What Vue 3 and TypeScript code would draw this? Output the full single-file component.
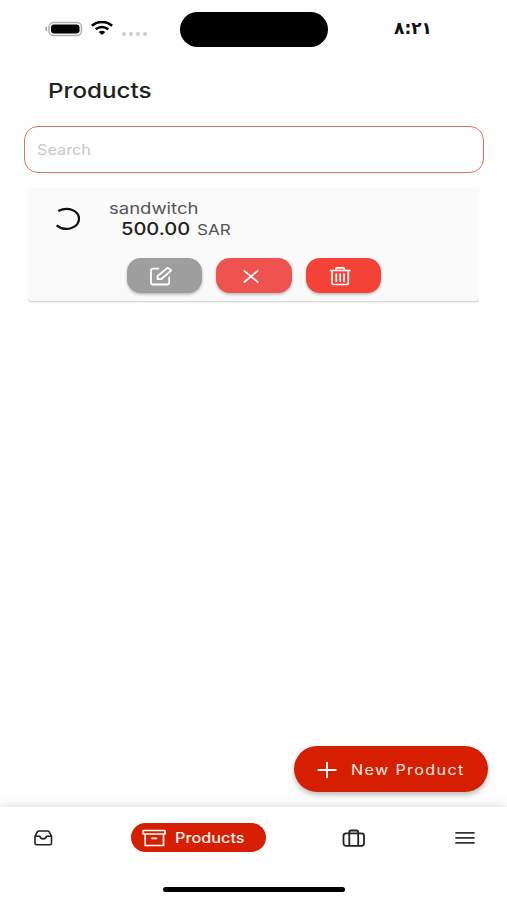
<script setup lang="ts">
import { ref } from 'vue'

interface Product {
  id: number
  name: string
  price: string
  currency: string
}

const query = ref('')
const products: Product[] = [{ id: 1, name: 'sandwitch', price: '500.00', currency: 'SAR' }]
</script>

<template>
  <div class="screen">
    <header class="status">
      <svg class="battery" viewBox="0 0 38 16" fill="none">
        <path d="M1.600 5.800v4.400C.4 9.700.4 6.300 1.600 5.800Z" fill="#999" stroke="#999" stroke-width=".6" />
        <rect x="4" y="1.500" width="32.500" height="13" rx="4.500" stroke="#b0b0b0" stroke-width="1.500" />
        <rect x="6" y="3.500" width="28.500" height="9" rx="3" fill="#000" />
      </svg>
      <svg class="wifi" viewBox="0 0 22 14" fill="none" stroke="#000">
        <path d="M.9 4.800C6.500-.3 15.500-.3 21.100 4.800" stroke-width="2.700" />
        <path d="M4.700 8.300C8.400 5.300 13.600 5.300 17.300 8.300" stroke-width="2.500" />
        <path d="M7.700 11.100Q11 8.600 14.300 11.100L11 13.900Z" fill="#000" stroke="none" />
      </svg>
      <div class="dots"><i v-for="n in 4" :key="n"></i></div>
      <div class="island"></div>
      <div class="time"><span>٨:٢١</span></div>
    </header>

    <h1 class="title"><span>Products</span></h1>

    <label class="search">
      <input v-model="query" type="text" placeholder="Search" aria-label="Search" />
    </label>

    <article v-for="p in products" :key="p.id" class="card">
      <div class="info">
        <svg class="spinner" viewBox="0 0 26 24" fill="none" stroke="#111" stroke-width="2.200">
          <path d="M3.300 4C13-1 24 3.500 24 11.800S11.500 26 1.600 18.300" />
        </svg>
        <div class="text">
          <div class="name"><span>{{ p.name }}</span></div>
          <div class="price">
            <b><span>{{ p.price }}</span></b>
            <em><span>{{ p.currency }}</span></em>
          </div>
        </div>
      </div>
      <div class="actions">
        <button class="edit" aria-label="Edit">
          <svg viewBox="0 0 24 20" fill="none" stroke="#fff" stroke-width="1.800" stroke-linejoin="round" stroke-linecap="round">
            <path d="M9.500 2.700H4Q2 2.700 2 4.700V16.500Q2 18.500 4 18.500H18.200Q20.200 18.500 20.200 16.500V11.500" />
            <path d="M8.600 13.200V10L18.700 1.700L22.200 4.500L12.100 13.200Z" />
          </svg>
        </button>
        <button class="cancel" aria-label="Deactivate">
          <svg viewBox="0 0 24 20" fill="none" stroke="#fff" stroke-width="1.700" stroke-linecap="round">
            <path d="M5.300 4.800L18.700 16M18.700 4.800L5.300 16" />
          </svg>
        </button>
        <button class="delete" aria-label="Delete">
          <svg viewBox="0 0 24 20" fill="none" stroke="#fff" stroke-width="1.700" stroke-linejoin="round" stroke-linecap="round">
            <path d="M2.500 4.500H21.800M7.800 4.300V3Q7.800 1.900 9 1.900H15.300Q16.500 1.900 16.500 3V4.300M4 4.500V16.700Q4 18.500 6 18.500H18.300Q20.300 18.500 20.300 16.700V4.500M8.300 8V15.200M12.200 8V15.200M16 8V15.200" />
          </svg>
        </button>
      </div>
    </article>

    <div class="fab-row">
      <button class="fab">
        <svg viewBox="0 0 20 18" stroke="#fff" stroke-width="1.900" stroke-linecap="round">
          <path d="M1.300 9H18.700M10 1.800V16.200" />
        </svg>
        <span>New Product</span>
      </button>
    </div>

    <nav class="nav">
      <a class="inbox" aria-label="Orders">
        <svg viewBox="0 0 20 18" fill="none" stroke="#222" stroke-width="1.600" stroke-linejoin="round">
          <path d="M2 7.200L4.400 2.900Q4.900 2 6 2H14.600Q15.700 2 16.200 2.900L18.500 7.200V14.200Q18.500 15.800 16.900 15.800H3.600Q2 15.800 2 14.200ZM2 7.200H6.900Q7.600 9.900 10.200 9.900T13.500 7.200H18.500" />
        </svg>
      </a>
      <a class="active">
        <svg viewBox="0 0 24 18" fill="none" stroke="#fff" stroke-width="1.700" stroke-linejoin="round" stroke-linecap="round">
          <path d="M1.200 1.500H23V5H1.200ZM3.200 5V16.500H21.500V5M10 9.300H14.500" />
        </svg>
        <span>Products</span>
      </a>
      <a class="case" aria-label="Catalog">
        <svg viewBox="0 0 24 18" fill="none" stroke="#222" stroke-width="1.800" stroke-linejoin="round">
          <rect x="1.500" y="4.400" width="20.500" height="12.400" rx="2.500" />
          <path d="M7.300 16.800V3.200Q7.300 1.500 9 1.500H14.500Q16.200 1.500 16.200 3.200V16.800" />
        </svg>
      </a>
      <a class="menu" aria-label="Menu">
        <svg viewBox="0 0 20 14" stroke="#333" stroke-width="1.800">
          <path d="M.3 1.900H19.600M.3 6.900H19.600M.3 11.900H19.600" />
        </svg>
      </a>
    </nav>
    <footer class="home"><div></div></footer>
  </div>
</template>

<style>
body {
  background: #fefefe;
}
</style>

<style scoped>
* {
  box-sizing: border-box;
}
.screen {
  width: 507px;
  height: 900px;
  display: flex;
  flex-direction: column;
  overflow: hidden;
  background: #fefefe;
  color: #222;
  font-family: Inter, "Liberation Sans", sans-serif;
}
svg {
  display: block;
  flex: none;
}
button {
  border: 0;
  padding: 0;
  font-family: inherit;
}
span {
  display: inline-block;
  transform-origin: 0 50%;
  white-space: nowrap;
}
.status {
  height: 59px;
  padding-left: 45px;
  display: flex;
  align-items: center;
  flex: none;
}
.battery {
  width: 38px;
  height: 16px;
  margin-top: -2px;
}
.wifi {
  width: 22px;
  height: 14px;
  margin: -3px 0 0 8px;
}
.dots {
  display: flex;
  gap: 3px;
  margin: 8px 0 0 9px;
}
.dots i {
  width: 4px;
  height: 4px;
  border-radius: 50%;
  background: #cfcfcf;
}
.island {
  width: 148px;
  height: 35.500px;
  margin-left: 33px;
  border-radius: 18px;
  background: #000;
}
.time {
  margin: -3px 0 0 66px;
  width: 40px;
  font: bold 17px/20px "DejaVu Sans", sans-serif;
  color: #111;
}
.title {
  height: 67px;
  margin: 0;
  padding-left: 48px;
  font-size: 20.5px;
  line-height: 64px;
  font-weight: 500;
}
.title span {
  transform: scaleX(1.18);
}
.search {
  flex: none;
  width: 460px;
  height: 47px;
  margin-left: 24px;
  padding-left: 12px;
  display: flex;
  align-items: center;
  border: 1.500px solid #e0705f;
  border-radius: 14px;
  overflow: hidden;
}
.search input {
  width: 360px;
  height: 30px;
  padding: 0;
  border: 0;
  outline: 0;
  background: transparent;
  font: 400 14px/30px Inter, sans-serif;
  transform: scaleX(1.16);
  transform-origin: 0 50%;
}
.search input::placeholder {
  color: #c8c8c8;
  opacity: 1;
}
.card {
  flex: none;
  width: 451px;
  height: 113px;
  margin: 15px 0 0 28px;
  background: #fafafa;
  border-radius: 4px;
  box-shadow: 0 1px 2px rgba(0, 0, 0, 0.2);
  clip-path: inset(0 0 -4px 0);
}
.info {
  height: 70px;
  padding: 9px 0 0 27px;
  display: flex;
}
.spinner {
  width: 26px;
  height: 24px;
  margin-top: 10px;
}
.text {
  margin-left: 28px;
}
.name {
  height: 21px;
  font-size: 15.500px;
  line-height: 23px;
  color: #555;
}
.name span {
  transform: scaleX(1.195);
}
.price {
  padding-left: 12px;
  display: flex;
  line-height: 23px;
}
.price b {
  width: 76px;
  font-size: 17px;
  font-weight: 500;
}
.price b span {
  transform: scaleX(1.18);
}
.price em {
  font-size: 15px;
  font-style: normal;
  color: #555;
}
.price em span {
  transform: scaleX(1.14);
}
.actions {
  display: flex;
  gap: 14px;
  padding-left: 98.500px;
}
.actions button {
  width: 75.500px;
  height: 35px;
  border-radius: 14px;
  box-shadow: 0 1.500px 3px rgba(0, 0, 0, 0.28);
  display: flex;
  align-items: center;
  padding-left: 22.500px;
}
.actions svg {
  width: 24px;
  height: 20px;
}
.actions .edit {
  background: #9e9e9e;
}
.actions .cancel {
  background: #ef5350;
}
.actions .delete {
  background: #f44336;
}
.fab-row {
  flex: 1;
  display: flex;
  justify-content: flex-end;
  align-items: flex-end;
  padding: 0 19px 15px 0;
}
.fab {
  width: 194px;
  height: 46px;
  border-radius: 24px;
  background: #d61f00;
  color: #ffe9e4;
  box-shadow: 0 3px 5px rgba(0, 0, 0, 0.25);
  display: flex;
  align-items: center;
  padding-left: 23px;
  font-size: 14px;
  letter-spacing: 1.200px;
}
.fab svg {
  width: 20px;
  height: 18px;
  margin: 1px 14px 0 0;
}
.fab span {
  transform: scaleX(1.15);
}
.nav {
  flex: none;
  height: 62px;
  background: #fff;
  box-shadow: 0 -1px 10px rgba(0, 0, 0, 0.13);
  display: flex;
  align-items: center;
  padding-left: 33px;
}
.inbox svg {
  width: 20px;
  height: 18px;
}
.active {
  width: 135.500px;
  height: 29px;
  margin: -1px 0 0 77.500px;
  padding-left: 11.500px;
  display: flex;
  align-items: center;
  gap: 9px;
  border-radius: 15px;
  background: #d61f00;
  color: #fff0ed;
  font-size: 14px;
  font-weight: 500;
}
.active svg {
  width: 24px;
  height: 18px;
}
.active span {
  transform: scaleX(1.16);
}
.case {
  margin-left: 76px;
}
.case svg {
  width: 24px;
  height: 18px;
}
.menu {
  margin-left: 89px;
}
.menu svg {
  width: 20px;
  height: 14px;
}
.home {
  flex: none;
  height: 31px;
  background: #fff;
  display: flex;
  align-items: flex-end;
  padding: 0 0 8px 163px;
}
.home div {
  width: 182px;
  height: 5px;
  border-radius: 3px;
  background: #000;
}
</style>
